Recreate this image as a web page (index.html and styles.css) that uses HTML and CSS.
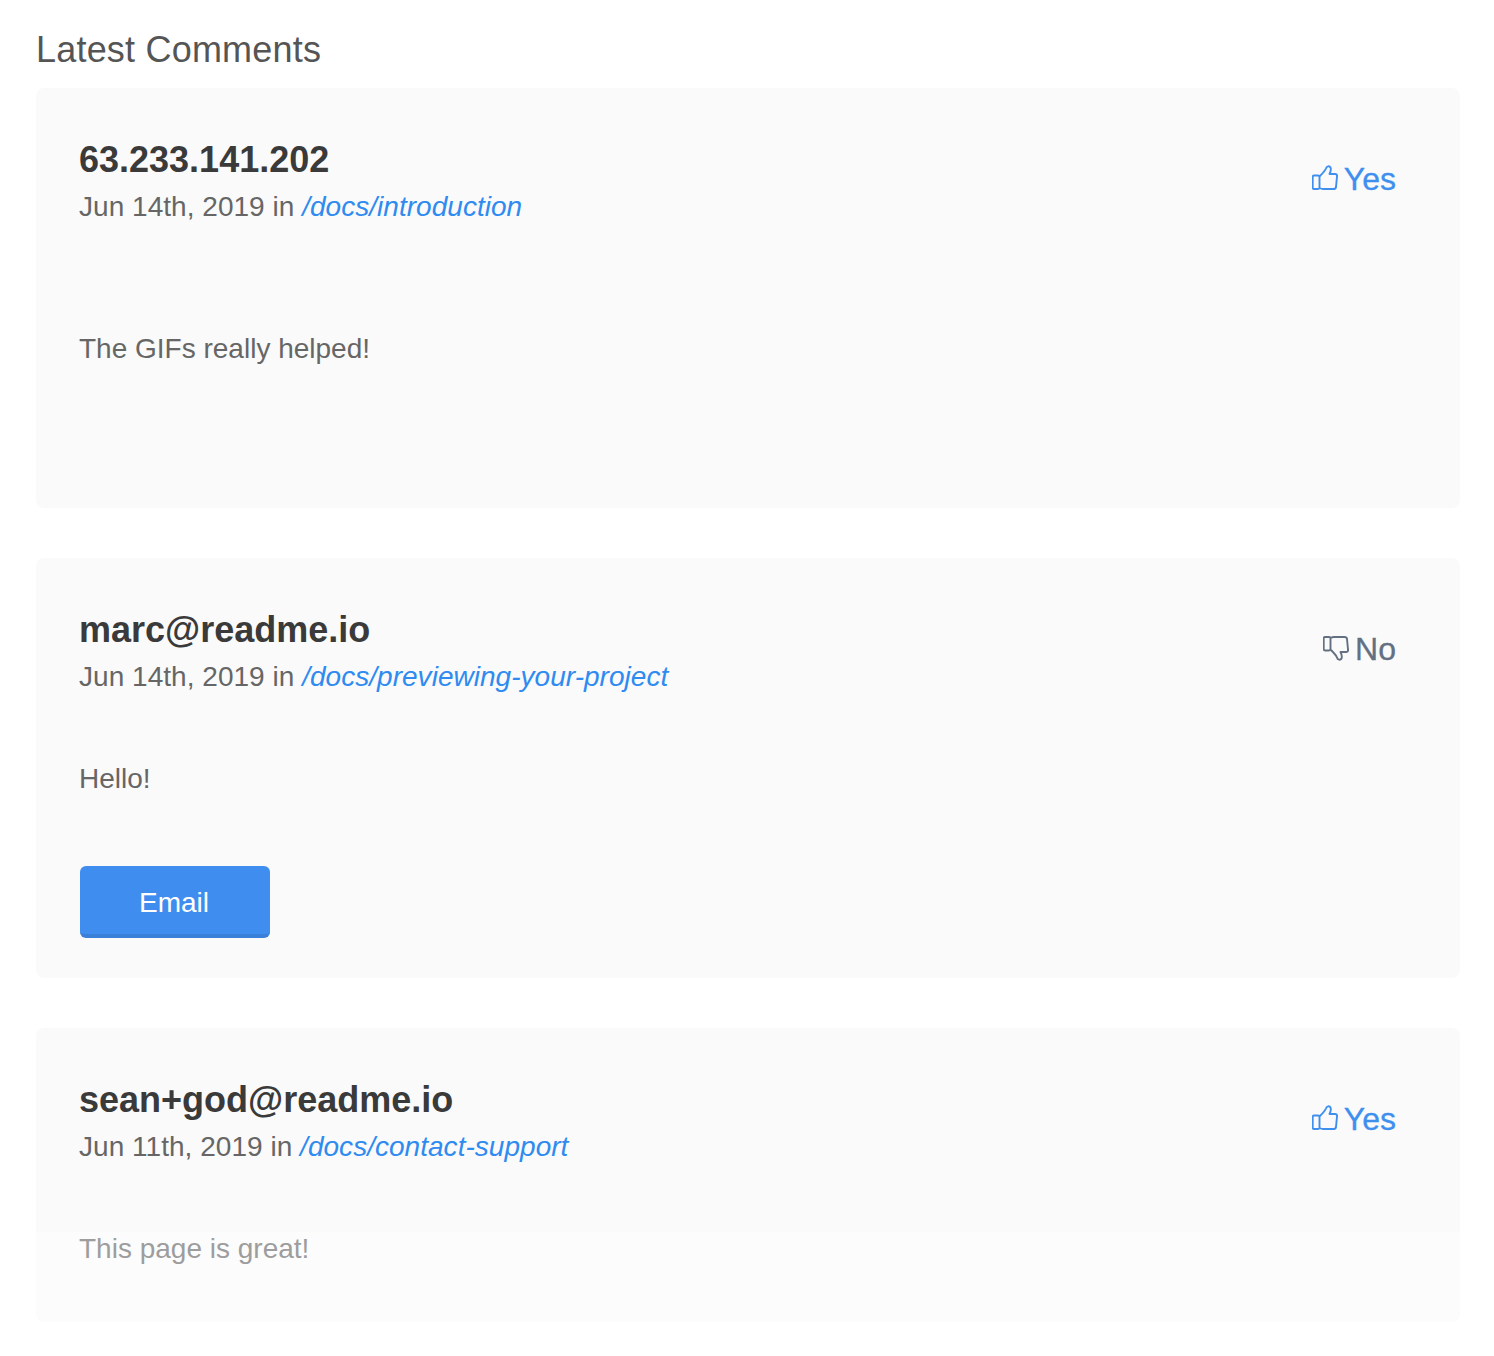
FILE: index.html
```
<!DOCTYPE html>
<html lang="en">
<head>
<meta charset="utf-8">
<title>Latest Comments</title>
<link rel="stylesheet" href="styles.css">
</head>
<body>
<main class="page">
  <h2 class="title">Latest Comments</h2>
  <div class="list">
    <article class="card">
      <header class="head">
        <div>
          <div class="name">63.233.141.202</div>
          <div class="meta">Jun 14th, 2019 in <a class="link" href="#">/docs/introduction</a></div>
        </div>
        <div class="vote yes">
          <svg class="icon" viewBox="0 0 26 26"><path d="M7.500 11.500C10 9 13 6 14 3.500C14.500 1 17.500 .5 18.500 2.500C19.300 4.500 18.500 7 17.500 9H23C24.500 9 25.300 10 25 11.500L24 22C23.800 23.500 23 24 21.500 24H11C9.500 24 8.500 23.500 7.500 23M2 10.500H6C7 10.500 7.500 11 7.500 12V22.500C7.500 23.500 7 24 6 24H2C1 24 .7 23.500 .7 22.500V12C.7 11 1 10.500 2 10.500Z"/></svg>
          <span class="vote-label">Yes</span>
        </div>
      </header>
      <p class="body body-tall">The GIFs really helped!</p>
    </article>
    <article class="card">
      <header class="head">
        <div>
          <div class="name">marc@readme.io</div>
          <div class="meta">Jun 14th, 2019 in <a class="link" href="#">/docs/previewing-your-project</a></div>
        </div>
        <div class="vote no">
          <svg class="icon" viewBox="0 0 26 26"><path transform="matrix(1 0 0 -1 0 26)" d="M7.500 11.500C10 9 13 6 14 3.500C14.500 1 17.500 .5 18.500 2.500C19.300 4.500 18.500 7 17.500 9H23C24.500 9 25.300 10 25 11.500L24 22C23.800 23.500 23 24 21.500 24H11C9.500 24 8.500 23.500 7.500 23M2 10.500H6C7 10.500 7.500 11 7.500 12V22.500C7.500 23.500 7 24 6 24H2C1 24 .7 23.500 .7 22.500V12C.7 11 1 10.500 2 10.500Z"/></svg>
          <span class="vote-label">No</span>
        </div>
      </header>
      <p class="body">Hello!</p>
      <a class="btn" href="#">Email</a>
    </article>
    <article class="card">
      <header class="head">
        <div>
          <div class="name">sean+god@readme.io</div>
          <div class="meta">Jun 11th, 2019 in <a class="link" href="#">/docs/contact-support</a></div>
        </div>
        <div class="vote yes">
          <svg class="icon" viewBox="0 0 26 26"><path d="M7.500 11.500C10 9 13 6 14 3.500C14.500 1 17.500 .5 18.500 2.500C19.300 4.500 18.500 7 17.500 9H23C24.500 9 25.300 10 25 11.500L24 22C23.800 23.500 23 24 21.500 24H11C9.500 24 8.500 23.500 7.500 23M2 10.500H6C7 10.500 7.500 11 7.500 12V22.500C7.500 23.500 7 24 6 24H2C1 24 .7 23.500 .7 22.500V12C.7 11 1 10.500 2 10.500Z"/></svg>
          <span class="vote-label">Yes</span>
        </div>
      </header>
      <p class="body">This page is great!</p>
    </article>
  </div>
  <div class="fade"></div>
</main>
</body>
</html>
```
FILE: styles.css
```
* { box-sizing: border-box; }
html, body { margin: 0; background: #fff; }
body { font-family: "Liberation Sans", Arial, sans-serif; height: 1356px; overflow: hidden; }
.page { position: relative; height: 1356px; padding: 30px 34px 0 36px; }
.title { margin: 0 0 19px; font-size: 36px; line-height: 39px; font-weight: 400; color: #555; letter-spacing: 0.2px; }
.list { display: flex; flex-direction: column; gap: 50px; }
.card { height: 420px; padding: 51px 64px 0 43px; background: #fafafa; border-radius: 8px; }
.card:last-child { height: 294px; }
.head { display: flex; justify-content: space-between; align-items: flex-start; }
.name { font-size: 36px; line-height: 42px; font-weight: 700; color: #3a3a3a; }
.meta { margin-top: 10px; font-size: 28px; line-height: 32px; color: #666; letter-spacing: 0.03px; }
.link { color: #2f8bef; font-style: italic; text-decoration: none; }
.vote { display: flex; align-items: center; gap: 6px; font-size: 32px; line-height: 40px; margin-top: 20px; }
.vote-label { -webkit-text-stroke: 0.3px currentColor; }
.icon { width: 26px; height: 26px; margin-top: -2px; fill: none; stroke: currentColor; stroke-width: 1.900; stroke-linejoin: round; }
.yes { color: #3f8fee; }
.no { color: #637082; }
.body { margin: 70px 0 0; font-size: 28px; line-height: 32px; color: #666; }
.body-tall { margin-top: 110px; }
.btn { display: flex; align-items: center; justify-content: center; width: 190px; height: 72px; margin: 71px 0 0 1px; padding: 6px 2px 0 0; background: #3f8eef; border-bottom: 4px solid #3b80d8; border-radius: 6px; color: #fff; font-size: 28px; text-decoration: none; }
.fade { position: absolute; left: 0; right: 0; bottom: 0; height: 124px; background: rgba(255,255,255,.36); }
```
